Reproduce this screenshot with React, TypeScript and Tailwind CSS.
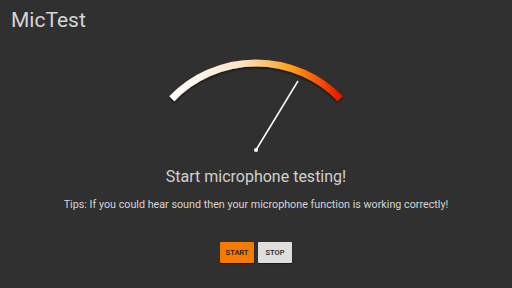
export default function App() {
  return (
    <div
      className="w-full h-[288px] bg-[#303030] flex flex-col overflow-hidden"
      style={{ fontFamily: "Roboto, 'Liberation Sans', sans-serif" }}
    >
      <div className="pt-[8px] pl-[11px] text-[21px] leading-[24px] text-[#d6d6d6]">
        MicTest
      </div>

      <div className="mt-[18px] flex justify-center">
        <svg width="200" height="110" viewBox="0 0 200 110">
          <defs>
            <linearGradient
              id="arcGrad"
              gradientUnits="userSpaceOnUse"
              x1="16"
              y1="0"
              x2="184"
              y2="0"
            >
              <stop offset="0" stopColor="#ffffff" />
              <stop offset="0.42" stopColor="#fce2c6" />
              <stop offset="0.72" stopColor="#ff9c14" />
              <stop offset="1" stopColor="#ee1500" />
            </linearGradient>
            <filter id="shadow" x="-10%" y="-20%" width="120%" height="150%">
              <feDropShadow dx="0" dy="1.5" stdDeviation="1" floodColor="#000" floodOpacity="0.6" />
            </filter>
          </defs>
          <path
            d="M 15.8 48.7 A 117 117 0 0 1 184.2 48.7"
            fill="none"
            stroke="url(#arcGrad)"
            strokeWidth="7"
            filter="url(#shadow)"
          />
          <line x1="100" y1="100" x2="142" y2="31" stroke="#ffffff" strokeWidth="1.5" />
          <circle cx="100" cy="100" r="2" fill="#ffffff" />
        </svg>
      </div>

      <div className="mt-[7px] text-center text-[16px] leading-[20px] text-[#d0d0d0]">
        Start microphone testing!
      </div>
      <div className="mt-[10px] text-center text-[10.75px] leading-[16px] text-[#d4d4d4]">
        Tips: If you could hear sound then your microphone function is working correctly!
      </div>

      <div className="mt-[29px] flex justify-center gap-[4px]">
        <button className="w-[34px] h-[21px] bg-[#f57a00] text-[7.5px] font-medium text-[#1a1a1a] rounded-[1px] shadow-[0_1px_1px_rgba(0,0,0,0.5)]">
          START
        </button>
        <button className="w-[34px] h-[21px] bg-[#dedede] text-[7.5px] font-medium text-[#1a1a1a] rounded-[1px] shadow-[0_1px_1px_rgba(0,0,0,0.5)]">
          STOP
        </button>
      </div>
    </div>
  );
}
